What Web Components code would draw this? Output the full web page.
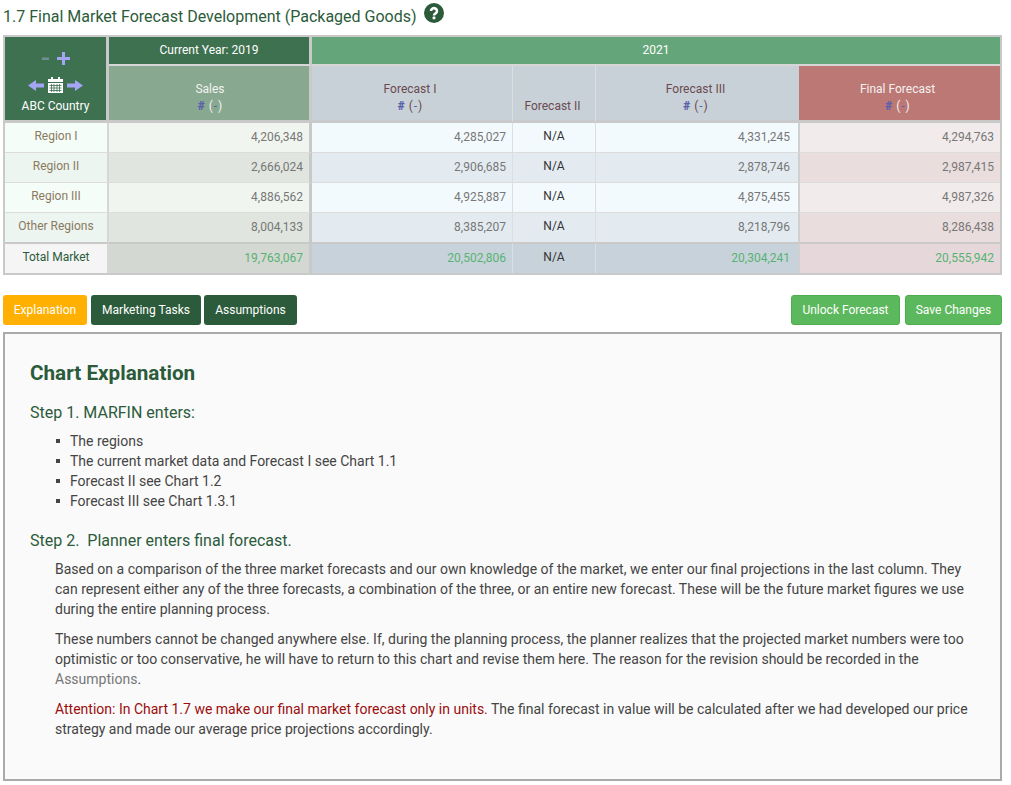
<!DOCTYPE html>
<html>
<head>
<meta charset="utf-8">
<title>Final Market Forecast</title>
<style>
  html, body { margin: 0; background: #fff; }
  body { font-family: Roboto, "Liberation Sans", sans-serif; color: #444; }
</style>
</head>
<body>
<forecast-page>
  <page-title>1.7 Final Market Forecast Development (Packaged Goods)</page-title>
  <forecast-table></forecast-table>
  <action-bar></action-bar>
  <explain-panel></explain-panel>
</forecast-page>

<script>
class ForecastPage extends HTMLElement {
  constructor() {
    super();
    this.attachShadow({ mode: "open" });
    this.shadowRoot.innerHTML = `
    <style>
      :host { display: flex; flex-direction: column; padding: 0 9px 0 3px; height: 785px; box-sizing: border-box; }
    </style>
    <slot></slot>`;
  }
}

class PageTitle extends HTMLElement {
  constructor() {
    super();
    this.attachShadow({ mode: "open" });
    this.shadowRoot.innerHTML = `
    <style>
      :host { display: flex; align-items: flex-start; height: 35px; color: #2b5b3a; font-size: 16px; line-height: 33px; }
      svg { width: 20px; height: 20px; margin: 3px 0 0 7px; }
    </style>
    <span><slot></slot></span>
    <svg viewBox="0 0 20 20">
      <circle cx="10" cy="10" r="10" fill="#2b5b3a"/>
      <path d="M7 8a3 2.800 0 1 1 4.600 2.300c-1 .6-1.600 1-1.600 2.200" fill="none" stroke="#fff" stroke-width="2.600"/>
      <rect x="8.600" y="13.600" width="2.800" height="2.600" rx=".4" fill="#fff"/>
    </svg>`;
  }
}

const rows = [
  { name: "Region I", vals: ["4,206,348", "4,285,027", "4,331,245", "4,294,763"], tone: 0 },
  { name: "Region II", vals: ["2,666,024", "2,906,685", "2,878,746", "2,987,415"], tone: 1 },
  { name: "Region III", vals: ["4,886,562", "4,925,887", "4,875,455", "4,987,326"], tone: 0 },
  { name: "Other Regions", vals: ["8,004,133", "8,385,207", "8,218,796", "8,286,438"], tone: 1 },
];
const total = ["19,763,067", "20,502,806", "20,304,241", "20,555,942"];

class ForecastTable extends HTMLElement {
  constructor() {
    super();
    this.attachShadow({ mode: "open" });
    const unit = `<span class="unit"><b>#</b> (<i>-</i>)</span>`;
    const body = rows.map((r, n) => {
      const cls = (r.tone ? "odd" : "") + (n === 3 ? " last" : "");
      return `
      <div class="c reg col1 ${cls}">${r.name}</div>
      <div class="c num sales col2 ${cls}">${r.vals[0]}</div>
      <div class="c num f col3 ${cls}">${r.vals[1]}</div>
      <div class="c na f col3 ${cls}">N/A</div>
      <div class="c num f col5 ${cls}">${r.vals[2]}</div>
      <div class="c num fin ${cls}">${r.vals[3]}</div>`;
    }).join("");
    this.shadowRoot.innerHTML = `
    <style>
      :host { display: block; width: 999px; font-size: 12px; }
      .grid {
        display: grid;
        grid-template-columns: 104px 203px 201px 83px 204px 200px;
        grid-template-rows: 29px 57px 30px 30px 30px 31px 29px;
        background: #cdcdcd;
        border: 2px solid #c9c9c9;
      }
      .c { display: flex; align-items: center; justify-content: center; min-width: 0; box-sizing: border-box; border-bottom: 1px solid #dcdcdc; }
      .col1 { border-right: 2px solid #d6d6d6; }
      .col2 { border-right: 3px solid #c9c9c9; }
      .col3 { border-right: 1px solid #dcdfe2; }
      .col5 { border-right: 2px solid #d0d0d0; }
      .last { border-bottom: 2px solid #c9c9c9; }
      .corner { grid-row: 1 / 3; background: #3e7150; color: #fff; flex-direction: column; justify-content: flex-start; padding-top: 15px; border-bottom: 3px solid #c9c9c9; border-right: 3px solid #c9c9c9; }
      .cur { background: #3e7150; color: #fff; border-bottom: 2px solid #d6d6d6; border-right: 3px solid #c9c9c9; padding-bottom: 1px; }
      .year { grid-column: 3 / 7; background: #64a67a; color: #fff; border-bottom: 2px solid #d6d6d6; padding-bottom: 1px; }
      .head { flex-direction: column; justify-content: flex-end; padding: 0 4px 5px 0; line-height: 17px; color: #6a4a50; background: #c9d1d8; border-bottom: 3px solid #c9c9c9; }
      .head.sales-h { background: #88a88f; color: #f2f2f2; border-right: 3px solid #c9c9c9; padding: 0 0 5px 2px; }
      .head.f3 { border-right: 1px solid #dcdfe2; }
      .head.f2 { padding-right: 3px; }
      .head.f5 { border-right: 1px solid #c9d1d8; }
      .head.final-h { background: #bb7875; color: #f6f0f0; margin-left: -1px; }
      .unit b { color: #5c61ac; font-weight: 900; margin-right: 1px; }
      .unit i { color: #5c61ac; font-style: normal; margin: 0 1px; }
      .reg { background: #f5fdf9; color: #8a7a60; padding-bottom: 3px; }
      .reg.odd { background: #edf5f0; }
      .num { justify-content: flex-end; padding: 0 6px 1px 0; color: #777; }
      .num.col5 { padding-right: 8px; }
      .sales { background: #f0f5ef; }
      .sales.odd { background: #e0e5df; }
      .f { background: #f3fafd; }
      .f.odd { background: #e3ebf1; }
      .na { color: #333; padding-bottom: 3px; }
      .fin { background: #f2ebeb; }
      .fin.odd { background: #eadddd; }
      .t { border-bottom: 0; }
      .t.num { color: #58b274; padding-bottom: 2px; }
      .t.reg { background: #f5f5f5; color: #2b5b3a; }
      .t.sales { background: #d3d8d2; }
      .t.f { background: #c8d2da; }
      .t.fin { background: #e6d8da; }
      .corner svg { display: block; flex: none; }
      .country { margin-top: 5px; line-height: 16px; }
    </style>
    <div class="grid">
      <div class="c corner">
        <svg width="28" height="13" viewBox="0 0 28 13">
          <rect x="0" y="5.500" width="7" height="2.500" fill="#6f8f93"/>
          <path d="M15 5h5V0h3v5h5v3h-5v5h-3V8h-5z" fill="#a5a5f5"/>
        </svg>
        <svg width="55" height="16" viewBox="0 0 55 16" style="margin-top:12px">
          <path d="M0 8.500 8 3v3.500h8v4H8V14z" fill="#a5a5f5"/>
          <path d="M55 8.500 47 3v3.500h-8v4h8V14z" fill="#a5a5f5"/>
          <path d="M20 2h15v14H20z" fill="#fff"/>
          <path d="M23 0h2v2h-2zM30 0h2v2h-2z" fill="#fff"/>
          <path d="M20 5.500h15" stroke="#3e7150"/>
          <path d="M21.500 8.500h12M21.500 11h12M21.500 13.500h12M23.500 7v8M26 7v8M29 7v8M31.500 7v8" stroke="#3e7150" stroke-width=".8" fill="none"/>
        </svg>
        <div class="country">ABC Country</div>
      </div>
      <div class="c cur">Current Year: 2019</div>
      <div class="c year">2021</div>
      <div class="c head sales-h"><span>Sales</span>${unit}</div>
      <div class="c head f3"><span>Forecast I</span>${unit}</div>
      <div class="c head f3 f2"><span>Forecast II</span></div>
      <div class="c head f5"><span>Forecast III</span>${unit}</div>
      <div class="c head final-h"><span>Final Forecast</span>${unit}</div>
      ${body}
      <div class="c reg col1 t">Total Market</div>
      <div class="c num sales col2 t">${total[0]}</div>
      <div class="c num f col3 t">${total[1]}</div>
      <div class="c na f col3 t">N/A</div>
      <div class="c num f col5 t">${total[2]}</div>
      <div class="c num fin t">${total[3]}</div>
    </div>`;
  }
}

class ActionBar extends HTMLElement {
  constructor() {
    super();
    this.attachShadow({ mode: "open" });
    this.shadowRoot.innerHTML = `
    <style>
      :host { display: flex; width: 999px; margin-top: 20px; gap: 3px; font-size: 12px; }
      button { font: inherit; height: 30px; border-radius: 3px; border: 1px solid transparent; color: #fff; padding: 0; margin: 0; }
      .y { background: #ffb000; width: 84px; margin-right: 1px; }
      .d { background: #2b5b3a; }
      .g { background: #5cb85c; border-color: #4cae4c; }
      .sp { flex: 1; }
    </style>
    <button class="y">Explanation</button>
    <button class="d" style="width:110px">Marketing Tasks</button>
    <button class="d" style="width:93px">Assumptions</button>
    <div class="sp"></div>
    <button class="g" style="width:109px">Unlock Forecast</button>
    <button class="g" style="width:97px;margin-left:2px">Save Changes</button>`;
  }
}

class ExplainPanel extends HTMLElement {
  constructor() {
    super();
    this.attachShadow({ mode: "open" });
    this.shadowRoot.innerHTML = `
    <style>
      :host { display: block; width: 999px; height: 449px; margin-top: 7px; box-sizing: border-box; border: 2px solid #aaa; background: #fafafa; padding: 26px 25px 0; font-size: 14px; line-height: 20px; color: #444; }
      h3 { margin: 0; font-size: 20.7px; line-height: 26px; font-weight: 700; color: #2b5b3a; }
      h4 { margin: 0; font-size: 16px; line-height: 20px; font-weight: 400; color: #2b5b3a; }
      .s1 { margin-top: 17px; }
      ul { list-style: none; margin: 8px 0 0; padding: 0 0 0 26px; }
      li { display: flex; align-items: center; }
      li::before { content: ""; width: 4px; height: 4px; background: #444; margin-right: 10px; }
      .s2 { margin-top: 20px; }
      p { margin: 10px 0 0; padding-left: 25px; }
      .s2 + p { margin-top: 8px; }
      .link { color: #777; }
      .warn { color: #9b0d0d; }
    </style>
    <h3>Chart Explanation</h3>
    <h4 class="s1">Step 1. MARFIN enters:</h4>
    <ul>
      <li>The regions</li>
      <li>The current market data and Forecast I see Chart 1.1</li>
      <li>Forecast II see Chart 1.2</li>
      <li>Forecast III see Chart 1.3.1</li>
    </ul>
    <h4 class="s2">Step 2.&nbsp; Planner enters final forecast.</h4>
    <p>Based on a comparison of the three market forecasts and our own knowledge of the market, we enter our final projections in the last column. They can represent either any of the three forecasts, a combination of the three, or an entire new forecast. These will be the future market figures we use during the entire planning process.</p>
    <p>These numbers cannot be changed anywhere else. If, during the planning process, the planner realizes that the projected market numbers were too optimistic or too conservative, he will have to return to this chart and revise them here. The reason for the revision should be recorded in the <span class="link">Assumptions</span>.</p>
    <p><span class="warn">Attention: In Chart 1.7 we make our final market forecast only in units.</span> <span>The final forecast in value will be calculated after we had developed our price</span> <span>strategy and made our average price projections accordingly.</span></p>`;
  }
}

customElements.define("forecast-page", ForecastPage);
customElements.define("page-title", PageTitle);
customElements.define("forecast-table", ForecastTable);
customElements.define("action-bar", ActionBar);
customElements.define("explain-panel", ExplainPanel);
</script>
</body>
</html>
